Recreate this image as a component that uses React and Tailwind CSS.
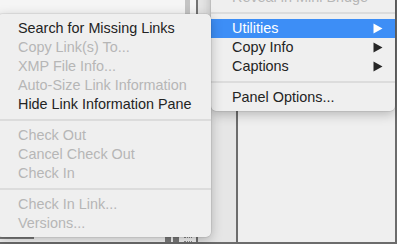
const subItems = [
  { label: 'Search for Missing Links' },
  { label: 'Copy Link(s) To...', disabled: true },
  { label: 'XMP File Info...', disabled: true },
  { label: 'Auto-Size Link Information', disabled: true },
  { label: 'Hide Link Information Pane' },
  { sep: true },
  { label: 'Check Out', disabled: true },
  { label: 'Cancel Check Out', disabled: true },
  { label: 'Check In', disabled: true },
  { sep: true },
  { label: 'Check In Link...', disabled: true },
  { label: 'Versions...', disabled: true },
];

const mainItems = [
  { label: 'Reveal in Mini Bridge', disabled: true },
  { sep: true },
  { label: 'Utilities', sub: true, active: true },
  { label: 'Copy Info', sub: true },
  { label: 'Captions', sub: true },
  { sep: true },
  { label: 'Panel Options...' },
];

function Arrow({ white }) {
  return (
    <svg width="10" height="11" viewBox="0 0 10 11" className="shrink-0">
      <path d="M0.5 0.5 L9.5 5.5 L0.5 10.5 Z" fill={white ? '#ffffff' : '#262626'} />
    </svg>
  );
}

function MenuRow({ item }) {
  if (item.sep) {
    return (
      <div className="h-[12px] flex items-center">
        <div className="h-[2px] w-full bg-[#dcdcdc]" />
      </div>
    );
  }
  const color = item.active
    ? 'bg-[#3d8ef6] text-white'
    : item.disabled
      ? 'text-[#b6b6b6]'
      : 'text-[#232323]';
  return (
    <div className={`h-[19px] flex items-center justify-between pl-[21px] pr-[12px] ${color}`}>
      <span className="whitespace-nowrap leading-none">{item.label}</span>
      {item.sub && <Arrow white={item.active} />}
    </div>
  );
}

export default function App() {
  return (
    <div
      className="relative w-[397px] h-[244px] overflow-hidden bg-[#efefef] text-[14.4px]"
      style={{ fontFamily: '"Liberation Sans", Arial, sans-serif' }}
    >
      {/* panel behind the menus */}
      <div className="flex h-[242px]">
        <div className="w-[196px] flex flex-col bg-[#f5f5f5]">
          <div className="flex-1 flex justify-end pr-[6px]">
            <div className="w-[5px] h-[30px] bg-[#c4c4c4]" />
          </div>
          <div className="h-[6px] flex items-center gap-[2px] pl-[165px]">
            <div className="w-[6px] h-[5px] bg-[#7c7c7c]" />
            <div className="w-[6px] h-[5px] bg-[#7c7c7c]" />
            <div className="w-[8px] h-[5px] ml-[3px] border-t border-b border-dotted border-[#8a8a8a]" />
          </div>
        </div>
        <div className="w-[2px] bg-[#737373]" />
        <div className="w-[38px] bg-[#e6e6e6]" />
        <div className="w-[2px] bg-[#6c6c6c]" />
        <div className="flex-1 bg-[#efefef]" />
        <div className="w-[2px] bg-[#6c6c6c]" />
      </div>
      <div className="h-[2px] bg-[#6c6c6c]" />

      {/* bar under submenu */}
      <div className="absolute left-0 top-[237px] w-[34px] h-[2px] bg-[#7d7d7d]" />

      {/* parent menu */}
      <div className="absolute left-[211px] top-[-16px] w-[184px] py-[4px] bg-[#efefef] rounded-[5px] shadow-[0_3px_12px_rgba(0,0,0,0.25),0_0_0_0.5px_rgba(0,0,0,0.12)]">
        {mainItems.map((item, i) => (
          <MenuRow key={i} item={item} />
        ))}
      </div>

      {/* submenu */}
      <div className="absolute left-[-3px] top-[14px] w-[214px] pt-[5px] pb-[4px] bg-[#efefef] rounded-[5px] shadow-[0_3px_12px_rgba(0,0,0,0.25),0_0_0_0.5px_rgba(0,0,0,0.12)]">
        {subItems.map((item, i) => (
          <MenuRow key={i} item={item} />
        ))}
      </div>
    </div>
  );
}
